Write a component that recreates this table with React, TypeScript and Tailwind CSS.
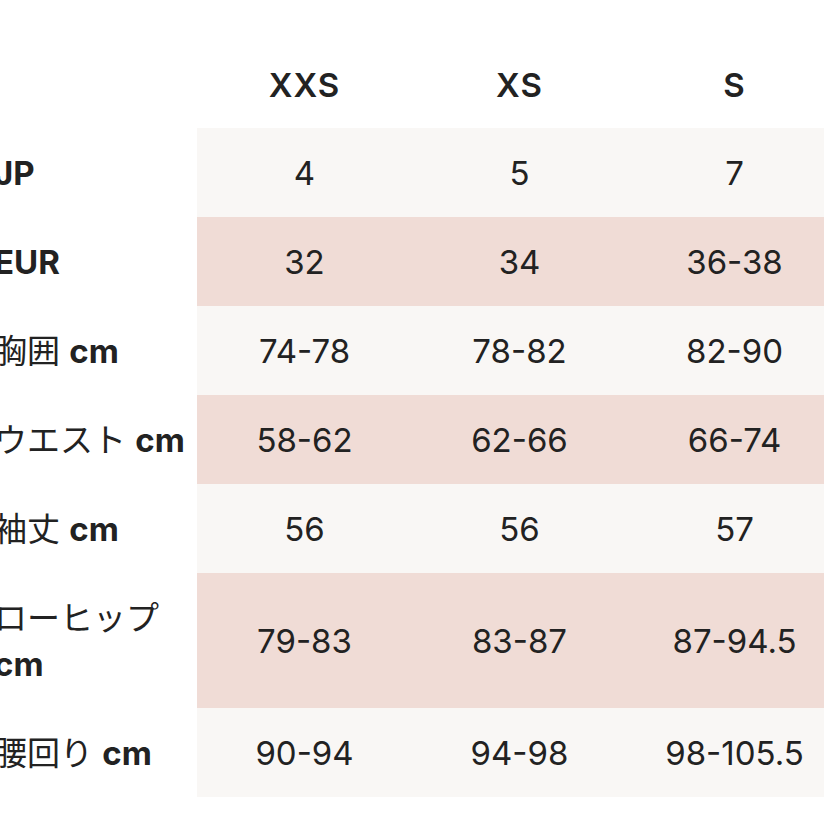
import React from "react";

const rows: { label: React.ReactNode; values: string[]; pink: boolean }[] = [
  { label: <span className="font-bold">JP</span>, values: ["4", "5", "7"], pink: false },
  { label: <span className="font-bold">EUR</span>, values: ["32", "34", "36-38"], pink: true },
  { label: <>胸囲 <span className="font-bold">cm</span></>, values: ["74-78", "78-82", "82-90"], pink: false },
  { label: <>ウエスト <span className="font-bold">cm</span></>, values: ["58-62", "62-66", "66-74"], pink: true },
  { label: <>袖丈 <span className="font-bold">cm</span></>, values: ["56", "56", "57"], pink: false },
  { label: <>ローヒップ <span className="font-bold">cm</span></>, values: ["79-83", "83-87", "87-94.5"], pink: true },
  { label: <>腰回り <span className="font-bold">cm</span></>, values: ["90-94", "94-98", "98-105.5"], pink: false },
];

export default function App() {
  return (
    <div
      className="w-[824px] h-[824px] overflow-hidden bg-white text-[#222222]"
      style={{ fontFamily: 'Inter, "Noto Sans CJK JP", sans-serif' }}
    >
      <div className="-ml-[6px] w-[848px] text-[33px] leading-[46px]">
        <div className="flex pt-[62px] pb-[20px]">
          <div className="w-[203px]" />
          {["XXS", "XS", "S"].map((s) => (
            <div key={s} className="w-[215px] text-center font-semibold tracking-[1px]">
              {s}
            </div>
          ))}
        </div>
        {rows.map((r, i) => (
          <div key={i} className="flex">
            <div className="w-[203px] flex items-center py-[21.5px] pr-2">
              <div>{r.label}</div>
            </div>
            {r.values.map((v, j) => (
              <div
                key={j}
                className={`w-[215px] flex items-center justify-center py-[21.5px] ${
                  r.pink ? "bg-[#f0dcd6]" : "bg-[#f9f7f5]"
                }`}
              >
                {v}
              </div>
            ))}
          </div>
        ))}
      </div>
    </div>
  );
}
